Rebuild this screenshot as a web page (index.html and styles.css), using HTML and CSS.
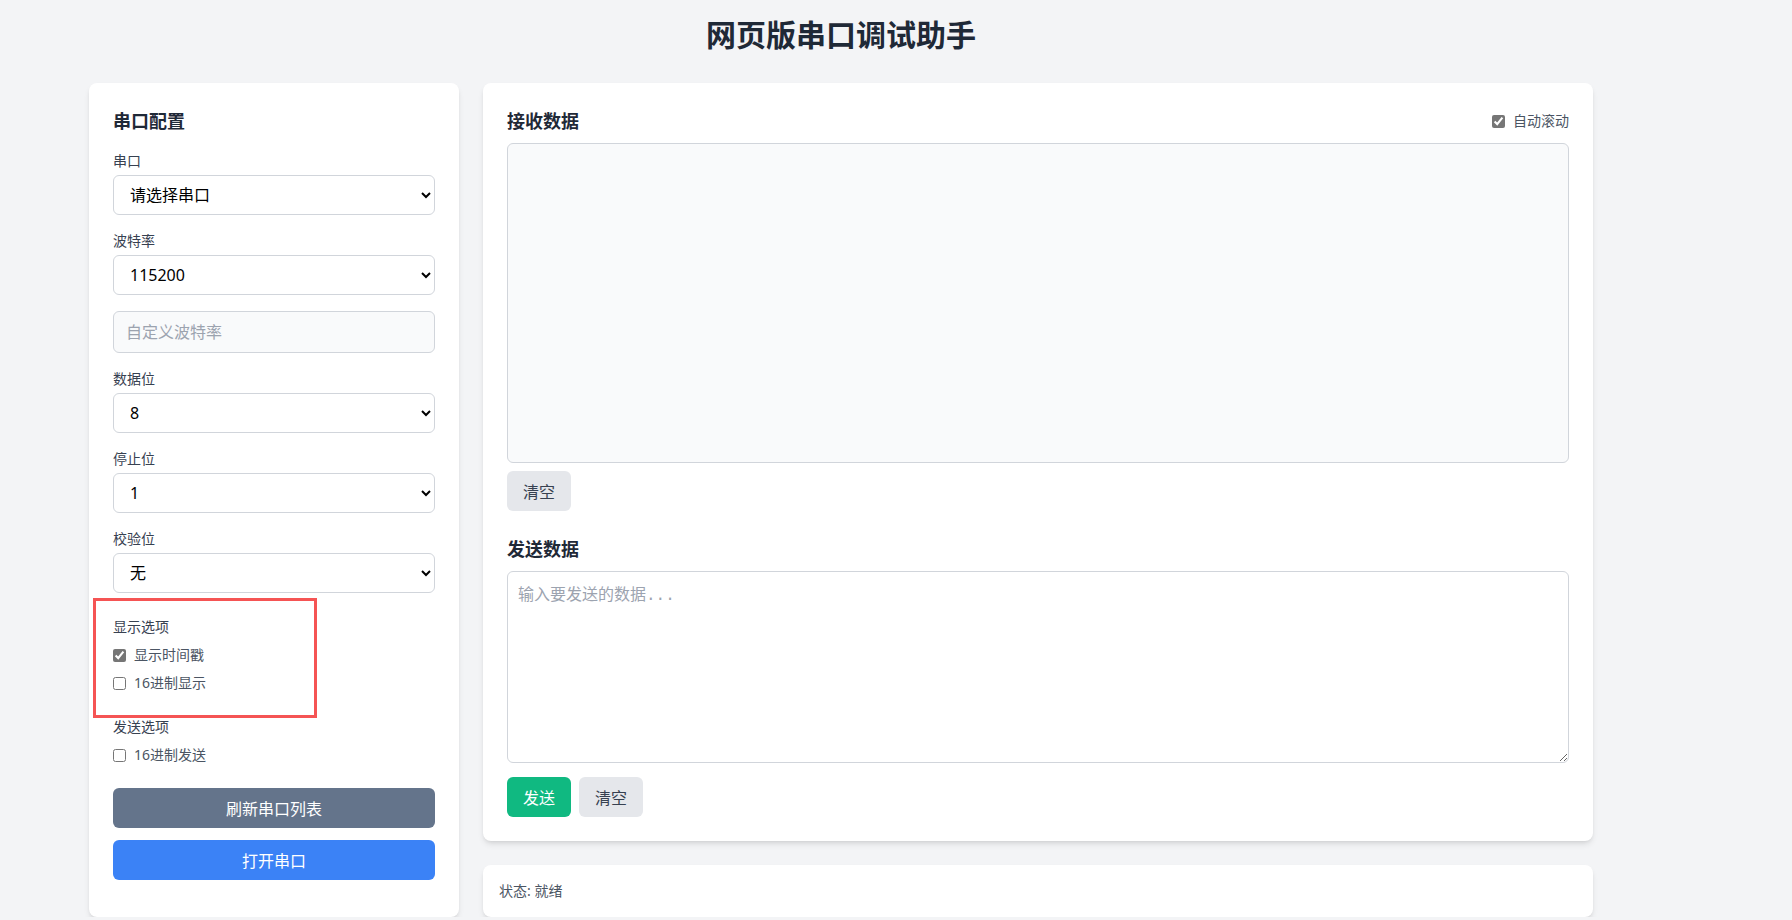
FILE: index.html
```html
<!DOCTYPE html>
<html lang="zh-CN">
<head>
<meta charset="utf-8">
<title>网页版串口调试助手</title>
<link rel="stylesheet" href="styles.css">
</head>
<body>
<div class="container">
  <h1 class="page-title">网页版串口调试助手</h1>
  <div class="layout">
    <div class="card config-card">
      <h2 class="card-title">串口配置</h2>
      <div class="field">
        <label class="field-label">串口</label>
        <select class="control"><option>请选择串口</option></select>
      </div>
      <div class="field">
        <label class="field-label">波特率</label>
        <select class="control"><option>115200</option></select>
        <input class="control text-input" type="text" placeholder="自定义波特率">
      </div>
      <div class="field">
        <label class="field-label">数据位</label>
        <select class="control"><option>8</option></select>
      </div>
      <div class="field">
        <label class="field-label">停止位</label>
        <select class="control"><option>1</option></select>
      </div>
      <div class="field">
        <label class="field-label">校验位</label>
        <select class="control"><option>无</option></select>
      </div>
      <div class="option-group">
        <div class="field-label">显示选项</div>
        <label class="check-row"><input type="checkbox" checked><span>显示时间戳</span></label>
        <label class="check-row"><input type="checkbox"><span>16进制显示</span></label>
      </div>
      <div class="option-group">
        <div class="field-label">发送选项</div>
        <label class="check-row"><input type="checkbox"><span>16进制发送</span></label>
      </div>
      <div class="action-stack">
        <button class="btn btn-block btn-slate">刷新串口列表</button>
        <button class="btn btn-block btn-blue">打开串口</button>
      </div>
    </div>
    <div class="right-col">
      <div class="card io-card">
        <div class="section-head">
          <h2 class="card-title">接收数据</h2>
          <label class="check-row small"><input type="checkbox" checked><span>自动滚动</span></label>
        </div>
        <div class="receive-box"></div>
        <div class="btn-row first-row">
          <button class="btn btn-gray">清空</button>
        </div>
        <h2 class="card-title send-title">发送数据</h2>
        <textarea class="send-box" placeholder="输入要发送的数据..."></textarea>
        <div class="btn-row">
          <button class="btn btn-green">发送</button>
          <button class="btn btn-gray">清空</button>
        </div>
      </div>
      <div class="card status-card">状态: 就绪</div>
    </div>
  </div>
  <div class="annotation"></div>
</div>
</body>
</html>
```
FILE: styles.css
```css
* { box-sizing: border-box; }
html, body { margin: 0; padding: 0; }
body {
  background: #f3f4f6;
  font-family: "Noto Sans", "Noto Sans CJK SC", sans-serif;
  color: #1f2937;
  overflow: hidden;
}
.container {
  position: relative;
  width: 1536px;
  margin-left: 73px;
  padding: 17px 16px 0;
}
.page-title {
  margin: 0 0 30px;
  text-align: center;
  font-size: 30px;
  line-height: 36px;
  font-weight: 700;
  color: #1f2937;
}
.layout {
  display: grid;
  grid-template-columns: 370px 1fr;
  gap: 24px;
}
.card {
  background: #fff;
  border-radius: 8px;
  box-shadow: 0 4px 6px -1px rgba(0,0,0,0.1), 0 2px 4px -2px rgba(0,0,0,0.1);
}
.config-card { padding: 24px; }
.card-title {
  margin: 0 0 16px;
  font-size: 18px;
  line-height: 28px;
  font-weight: 700;
  color: #1f2937;
}
.field { margin-bottom: 16px; }
.field-label {
  display: block;
  font-size: 14px;
  line-height: 20px;
  color: #374151;
  margin-bottom: 4px;
}
.control {
  display: block;
  width: 100%;
  height: 40px;
  border: 1px solid #d1d5db;
  border-radius: 6px;
  background: #fff;
  padding: 0 8px 0 12px;
  font-family: "Noto Sans", "Noto Sans CJK SC", sans-serif;
  font-size: 16px;
  color: #000;
  outline: none;
}
.text-input {
  margin-top: 16px;
  height: 42px;
  background: #f9fafb;
  padding-left: 12px;
}
.text-input::placeholder { color: #9ca3af; }
.option-group { padding-top: 8px; margin-bottom: 16px; }
.option-group .field-label { margin-bottom: 8px; }
.check-row {
  display: flex;
  align-items: center;
  gap: 8px;
  font-size: 14px;
  line-height: 20px;
  color: #4b5563;
  margin-bottom: 8px;
}
.check-row:last-child { margin-bottom: 0; }
.check-row input {
  margin: 0;
  width: 13px;
  height: 13px;
  accent-color: #767676;
}
.action-stack {
  margin-top: 23px;
  display: flex;
  flex-direction: column;
  gap: 12px;
}
.btn {
  height: 40px;
  border: none;
  border-radius: 6px;
  padding: 0 16px;
  font-family: "Noto Sans", "Noto Sans CJK SC", sans-serif;
  font-size: 16px;
  cursor: pointer;
}
.btn-block { width: 100%; }
.btn-slate { background: #64748b; color: #fff; }
.btn-blue { background: #3b82f6; color: #fff; }
.btn-green { background: #10b981; color: #fff; }
.btn-gray { background: #e5e7eb; color: #374151; }
.right-col {
  display: flex;
  flex-direction: column;
  gap: 24px;
}
.io-card { padding: 24px; }
.section-head {
  display: flex;
  justify-content: space-between;
  align-items: center;
  margin-bottom: 8px;
}
.section-head .card-title { margin: 0; }
.check-row.small { margin: 0; }
.receive-box {
  height: 320px;
  border: 1px solid #d1d5db;
  border-radius: 6px;
  background: #f9fafb;
}
.btn-row {
  display: flex;
  gap: 8px;
  margin-top: 14px;
}
.btn-row.first-row { margin-top: 8px; }
.send-title { margin: 24px 0 8px; }
.send-box {
  display: block;
  width: 100%;
  height: 192px;
  border: 1px solid #d1d5db;
  border-radius: 6px;
  padding: 12px 10px;
  font-family: "Liberation Mono", "Noto Sans CJK SC", monospace;
  font-size: 16px;
  line-height: 24px;
  resize: vertical;
  outline: none;
}
.send-box::placeholder { color: #9ca3af; }
.status-card {
  padding: 16px;
  font-size: 14px;
  line-height: 20px;
  color: #4b5563;
}
.annotation {
  position: absolute;
  left: 20px;
  top: 598px;
  width: 224px;
  height: 120px;
  border: 3px solid #f55454;
  pointer-events: none;
}
```
